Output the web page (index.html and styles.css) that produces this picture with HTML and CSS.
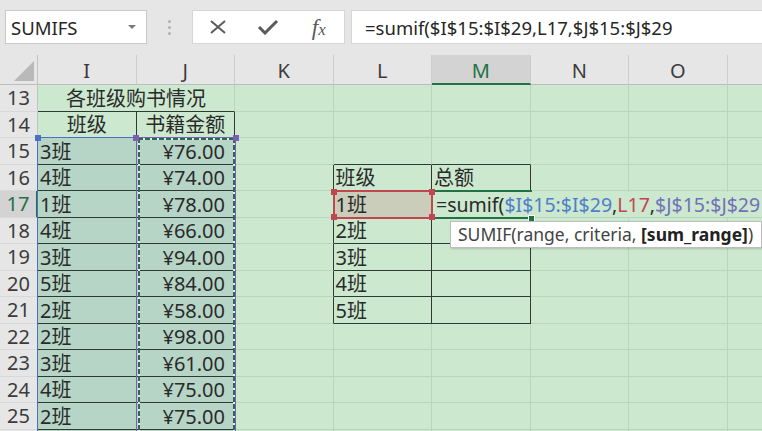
FILE: index.html
```html
<!DOCTYPE html>
<html lang="zh-CN">
<head>
<meta charset="utf-8">
<title>SUMIF</title>
<link rel="stylesheet" href="styles.css">
</head>
<body>
<div class="app">
  <div class="fbar">
    <div class="namebox"><span>SUMIFS</span><span class="caret"></span></div>
    <div class="grip"><span></span><span></span><span></span></div>
    <div class="btns">
      <div class="btn"><svg width="18" height="14" viewBox="0 0 18 14"><path d="M2 1 L16 13 M16 1 L2 13" stroke="#5a5a5a" stroke-width="2" fill="none"/></svg></div>
      <div class="btn"><svg width="22" height="16" viewBox="0 0 22 16"><path d="M2 8 L8 14 L20 2" stroke="#5a5a5a" stroke-width="3" fill="none"/></svg></div>
      <div class="btn fx"><span class="f">f</span><span class="x">x</span></div>
    </div>
    <div class="finput">=sumif($I$15:$I$29,L17,$J$15:$J$29</div>
  </div>

  <div class="sheet">
    <div class="corner"><span class="tri"></span></div>
    <div class="ch">I</div><div class="ch">J</div><div class="ch">K</div><div class="ch">L</div>
    <div class="ch on">M</div><div class="ch">N</div><div class="ch">O</div><div class="ch"></div>

    <div class="rh">13</div>
    <div class="c m2 ctr t-b">各班级购书情况</div><div class="c"></div><div class="c"></div><div class="c"></div><div class="c"></div><div class="c"></div><div class="c"></div>

    <div class="rh">14</div>
    <div class="c ctr t-r t-b">班级</div><div class="c ctr t-r t-b">书籍金额</div><div class="c"></div><div class="c"></div><div class="c"></div><div class="c"></div><div class="c"></div><div class="c"></div>

    <div class="rh">15</div>
    <div class="c s t-r t-b">3班</div><div class="c s rt t-r t-b">¥76.00</div><div class="c"></div><div class="c t-b"></div><div class="c t-b"></div><div class="c"></div><div class="c"></div><div class="c"></div>

    <div class="rh">16</div>
    <div class="c s t-r t-b">4班</div><div class="c s rt t-r t-b">¥74.00</div><div class="c t-r"></div><div class="c t-r t-b">班级</div><div class="c t-r t-b">总额</div><div class="c"></div><div class="c"></div><div class="c"></div>

    <div class="rh on">17</div>
    <div class="c s t-r t-b">1班</div><div class="c s rt t-r t-b">¥78.00</div><div class="c t-r"></div><div class="c lsel t-r t-b">1班</div><div class="c t-r t-b"></div><div class="c"></div><div class="c"></div><div class="c"></div>

    <div class="rh">18</div>
    <div class="c s t-r t-b">4班</div><div class="c s rt t-r t-b">¥66.00</div><div class="c t-r"></div><div class="c t-r t-b">2班</div><div class="c t-r t-b"></div><div class="c"></div><div class="c"></div><div class="c"></div>

    <div class="rh">19</div>
    <div class="c s t-r t-b">3班</div><div class="c s rt t-r t-b">¥94.00</div><div class="c t-r"></div><div class="c t-r t-b">3班</div><div class="c t-r t-b"></div><div class="c"></div><div class="c"></div><div class="c"></div>

    <div class="rh">20</div>
    <div class="c s t-r t-b">5班</div><div class="c s rt t-r t-b">¥84.00</div><div class="c t-r"></div><div class="c t-r t-b">4班</div><div class="c t-r t-b"></div><div class="c"></div><div class="c"></div><div class="c"></div>

    <div class="rh">21</div>
    <div class="c s t-r t-b">2班</div><div class="c s rt t-r t-b">¥58.00</div><div class="c t-r"></div><div class="c t-r t-b">5班</div><div class="c t-r t-b"></div><div class="c"></div><div class="c"></div><div class="c"></div>

    <div class="rh">22</div>
    <div class="c s t-r t-b">2班</div><div class="c s rt t-r t-b">¥98.00</div><div class="c"></div><div class="c"></div><div class="c"></div><div class="c"></div><div class="c"></div><div class="c"></div>

    <div class="rh">23</div>
    <div class="c s t-r t-b">3班</div><div class="c s rt t-r t-b">¥61.00</div><div class="c"></div><div class="c"></div><div class="c"></div><div class="c"></div><div class="c"></div><div class="c"></div>

    <div class="rh">24</div>
    <div class="c s t-r t-b">4班</div><div class="c s rt t-r t-b">¥75.00</div><div class="c"></div><div class="c"></div><div class="c"></div><div class="c"></div><div class="c"></div><div class="c"></div>

    <div class="rh">25</div>
    <div class="c s t-r t-b">2班</div><div class="c s rt t-r t-b">¥75.00</div><div class="c"></div><div class="c"></div><div class="c"></div><div class="c"></div><div class="c"></div><div class="c"></div>

    <div class="rh"></div>
    <div class="c s t-r t-b"></div><div class="c s t-r t-b"></div><div class="c"></div><div class="c"></div><div class="c"></div><div class="c"></div><div class="c"></div><div class="c"></div>

    <!-- overlays -->
    <div class="rng rng-i"><span class="h h-tl blue"></span></div>
    <div class="rng rng-j">
      <span class="ant ant-t"></span><span class="ant ant-l"></span><span class="ant ant-r"></span>
      <span class="h h-tl purple"></span><span class="h h-tr purple"></span>
    </div>
    <div class="edit">=sumif(<span class="ri">$I$15:$I$29</span>,<span class="rl">L17</span>,<span class="rj">$J$15:$J$29</span></div>
    <div class="active"></div>
    <div class="rng rng-l">
      <span class="h h-tl red"></span><span class="h h-tr red"></span><span class="h h-bl red"></span><span class="h h-br red"></span>
    </div>
    <div class="handle"></div>
    <div class="tip">SUMIF(range, criteria, <b>[sum_range]</b>)</div>
  </div>
</div>
</body>
</html>
```
FILE: styles.css
```css
* { box-sizing: border-box; margin: 0; padding: 0; }
html, body { width: 762px; height: 431px; overflow: hidden; }
body { background: #e6e6e6; font-family: "Noto Sans", "Noto Sans CJK SC", sans-serif; }
.app { width: 762px; height: 431px; overflow: hidden; position: relative; background: #e6e6e6; }

/* formula bar */
.fbar { display: flex; align-items: flex-start; height: 55px; padding: 10px 0 0 5px; }
.namebox { width: 142px; height: 34px; background: #fff; border: 1px solid #c9c9c9; display: flex; align-items: center; justify-content: space-between; padding: 0 10px 0 5px; font-size: 18.5px; color: #262626; }
.caret { width: 0; height: 0; border-left: 4px solid transparent; border-right: 4px solid transparent; border-top: 4px solid #7a7a7a; }
.grip { width: 45px; height: 34px; display: flex; flex-direction: column; align-items: center; justify-content: center; gap: 3px; }
.grip span { width: 3px; height: 3px; background: #b3b3b3; border-radius: 50%; }
.btns { width: 153px; height: 34px; background: #fff; border: 1px solid #d6d6d6; display: flex; }
.btn { flex: 1; display: flex; align-items: center; justify-content: center; }
.fx { font-family: "Liberation Serif", serif; font-style: italic; color: #5a5a5a; font-size: 23px; line-height: 1; }
.fx .x { font-size: 17px; margin-top: 4px; }
.finput { flex: 1; margin-left: 6px; height: 34px; background: #fff; border: 1px solid #d6d6d6; border-right: none; padding-left: 13px; display: flex; align-items: center; font-size: 18.5px; color: #262626; white-space: nowrap; }

/* sheet grid */
.sheet { position: relative; display: grid; grid-template-columns: 38px repeat(8, 98.5px); grid-template-rows: 30px repeat(14, 26.5px); }
.corner { background: #e6e6e6; border-right: 1px solid #c3c3c3; border-bottom: 1px solid #bdbdbd; position: relative; }
.tri { position: absolute; right: 3px; bottom: 3px; width: 0; height: 0; border-left: 20px solid transparent; border-bottom: 20px solid #b9b9b9; }
.ch { background: #e6e6e6; border-right: 1px solid #cdcdcd; border-bottom: 1px solid #bdbdbd; display: flex; align-items: center; justify-content: center; font-size: 20px; color: #3c3c3c; padding-top: 2px; }
.ch.on { background: #d3d3d3; color: #217346; border-bottom: 2px solid #217346; }
.rh { background: #e6e6e6; border-right: 1px solid #c3c3c3; border-bottom: 1px solid #d8d8d8; display: flex; align-items: center; justify-content: center; font-size: 20px; color: #3c3c3c; }
.rh.on { background: #d3d3d3; color: #217346; border-right: 2px solid #217346; }

.c { background: #cce8cf; border-right: 1px solid #b8d6bb; border-bottom: 1px solid #b8d6bb; font-size: 20px; color: #2a2a2a; display: flex; align-items: flex-end; padding: 0 0 0 2px; line-height: 25px; white-space: nowrap; overflow: hidden; }
.ctr { justify-content: center; padding-left: 0; }
.rt { justify-content: flex-end; padding-right: 9px; }
.s { background: #b7d5c6; }
.lsel { background: #c9cdb9; }
.t-r { border-right-color: #2f3b32; }
.t-b { border-bottom-color: #2f3b32; }
.m2 { grid-column: span 2; }

/* range highlights (overlays) */
.rng { position: absolute; }
.rng-i { left: 37px; top: 82px; width: 100.5px; height: 330px; border: 1px solid #4a70c6; border-right-color: transparent; }
.rng-j { left: 135.5px; top: 82px; width: 100.5px; height: 330px; border: 1px solid #7d5eb5; }
.ant { position: absolute; }
.ant-t { left: 1px; right: 0; top: 0; height: 2px; background: repeating-linear-gradient(90deg, #2c6a52 0 5px, #e4eee7 5px 7px); }
.ant-l { left: 1px; top: 0; bottom: 0; width: 2px; background: repeating-linear-gradient(180deg, #2c6a52 0 5px, #e4eee7 5px 7px); }
.ant-r { right: 0; top: 0; bottom: 0; width: 2px; background: repeating-linear-gradient(180deg, #2c6a52 0 5px, #e4eee7 5px 7px); }
.h { position: absolute; width: 6px; height: 6px; }
.h-tl { left: -3.5px; top: -3.5px; }
.h-tr { right: -3.5px; top: -3.5px; }
.h-bl { left: -3.5px; bottom: -3.5px; }
.h-br { right: -3.5px; bottom: -3.5px; }
.blue { background: #4a70c6; }
.purple { background: #7d5eb5; }
.red { background: #c1464f; }
.rng-l { left: 332.5px; top: 135px; width: 100.5px; height: 28.5px; border: 2px solid #c1464f; }

.edit { position: absolute; left: 433px; top: 136.5px; width: 330px; height: 25px; background: #cce8cf; font-size: 19.5px; line-height: 26px; color: #2a2a2a; padding-left: 3px; white-space: nowrap; }
.ri { color: #4f7fc8; }
.rl { color: #c1464f; }
.rj { color: #7270b8; }
.active { position: absolute; left: 432px; top: 134.5px; width: 99.5px; height: 29px; border-top: 2px solid #217346; border-bottom: 2px solid #217346; }
.handle { position: absolute; left: 527.5px; top: 160px; width: 7px; height: 7px; background: #217346; border: 1px solid #fff; }

.tip { position: absolute; left: 450px; top: 166px; width: 312px; height: 27px; background: #fff; border: 1px solid #bdbdbd; box-shadow: 1px 1px 2px rgba(0,0,0,0.18); font-size: 17.5px; color: #444; padding-left: 7px; line-height: 25px; white-space: nowrap; }
.tip b { color: #222; }
```
